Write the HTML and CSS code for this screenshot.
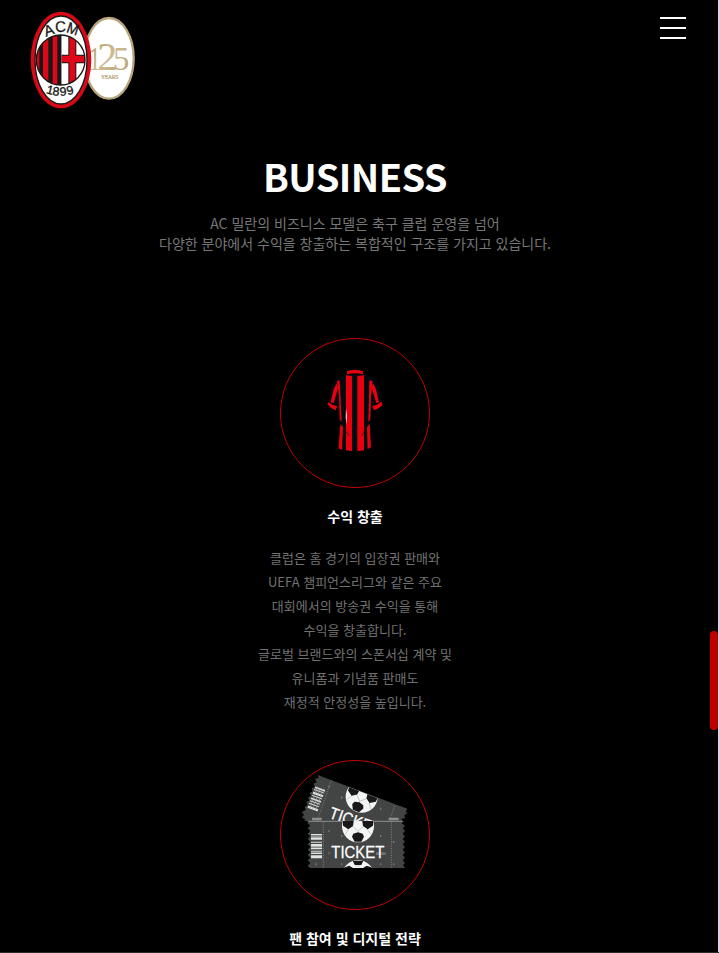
FILE: index.html
```html
<!DOCTYPE html>
<html lang="ko">
<head>
<meta charset="utf-8">
<title>AC Milan - Business</title>
<link rel="stylesheet" href="styles.css">
</head>
<body>
<div class="viewport">
<main class="page">
  <header class="header">
    <svg class="logo" viewBox="0 0 375 330" role="img" aria-label="AC Milan 125 years">
      <defs>
        <clipPath id="crest"><ellipse cx="122" cy="165" rx="73" ry="75"/></clipPath>
        <linearGradient id="gold" x1="0" y1="0" x2="1" y2="1"><stop offset="0" stop-color="#a88b55"/><stop offset=".5" stop-color="#cdbc92"/><stop offset="1" stop-color="#b49a68"/></linearGradient>
      </defs>
      <ellipse cx="267" cy="160" rx="74" ry="121" fill="#fff" stroke="#b8a57c" stroke-width="7"/>
      <g class="years" fill="url(#gold)">
        <text x="207" y="194" font-size="98"><tspan textLength="34" lengthAdjust="spacingAndGlyphs">1</tspan><tspan x="232" font-size="120">2</tspan><tspan x="279">5</tspan></text>
        <text x="243" y="221" font-size="17" textLength="52" stroke="#b49a68" stroke-width=".7">YEARS</text>
      </g>
      <ellipse cx="123" cy="165" rx="91" ry="145" fill="#d90918"/>
      <ellipse cx="123" cy="165" rx="78" ry="132" fill="#fff" stroke="#191715" stroke-width="4"/>
      <g clip-path="url(#crest)">
        <path fill="#dc0719" d="M45 85h78v160H45z"/>
        <path fill="#191715" d="M58 85h11v160H58zM85 85h13v160H85zM112 85h13v160h-13z"/>
        <path fill="#fff" d="M125 85h75v160h-75z"/>
        <path fill="#191715" d="M145 85h24v160h-24zM125 149h75v26h-75z"/>
        <path fill="#e0071b" d="M148 85h18v160h-18zM125 152h75v20h-75z"/>
      </g>
      <ellipse cx="122" cy="165" rx="73" ry="75" fill="none" stroke="#191715" stroke-width="4"/>
      <g class="crest-text">
        <text transform="translate(78 95) rotate(-19)" font-size="46" textLength="29" lengthAdjust="spacingAndGlyphs">A</text>
        <text transform="translate(106 81) rotate(-1)" font-size="46" textLength="32" lengthAdjust="spacingAndGlyphs">C</text>
        <text transform="translate(137 81) rotate(18)" font-size="46" textLength="35" lengthAdjust="spacingAndGlyphs">M</text>
        <text transform="translate(77 265) rotate(14)" font-size="37">1</text>
        <text transform="translate(97 271) rotate(5)" font-size="37">8</text>
        <text transform="translate(120 273) rotate(-5)" font-size="37">9</text>
        <text transform="translate(143 271) rotate(-15)" font-size="37">9</text>
      </g>
    </svg>
    <button class="menu" aria-label="menu"><span></span><span></span><span></span></button>
  </header>

  <section class="business">
    <h1>BUSINESS</h1>
    <p class="lead">AC 밀란의 비즈니스 모델은 축구 클럽 운영을 넘어<br>다양한 분야에서 수익을 창출하는 복합적인 구조를 가지고 있습니다.</p>

    <article class="item">
      <div class="circle">
        <svg viewBox="18 18 444 444">
          <path fill="#06080f" d="M216 121l-36 17-13 27-8 43 24 20 9-18 4 60-5 75q46 20 97 0l-5-75 5-60 8 18 26-20-8-43-13-27-36-17z"/>
          <g fill="#e9000e">
            <path d="M216 115q24-9 48 0v9q-24-6-48 0z"/>
            <path d="M213 127q9 2 18 1v226q-9 0-18-2zM247 128q10 1 20-1v225q-10 2-20 2z"/>
            <path d="M185 150l4 15-13 46-9-4 9-38zM294 150l-4 15 14 46 8-4-9-38z"/>
            <path d="M186 145l8-4 3 60 3 66-6-8-2-70zM283 141l10 4-5 45-2 69-6 8 2-66z"/>
            <path d="M161 208q11 10 26 12l-5 12q-15-6-25-18zM319 206q-11 10-27 13l5 13q17-6 26-17z"/>
            <path d="M196 274l8 8-3 69-10-5zM284 272l-8 11 2 65 10-5z"/>
          </g>
          <path d="M213 226l3 20-1 29-3-20z" fill="#d8d5cc"/>
          <path d="M202 272q8 23 20 37M276 272q-6 22-16 37" stroke="#11101a" stroke-width="2" fill="none"/>
        </svg>
      </div>
      <h2>수익 창출</h2>
      <p>클럽은 홈 경기의 입장권 판매와<br>UEFA 챔피언스리그와 같은 주요<br>대회에서의 방송권 수익을 통해<br>수익을 창출합니다.<br>글로벌 브랜드와의 스폰서십 계약 및<br>유니폼과 기념품 판매도<br>재정적 안정성을 높입니다.</p>
    </article>

    <article class="item">
      <div class="circle">
        <svg viewBox="18 18 444 444">
          <defs>
            <clipPath id="back"><path d="M128 60L398 164 380 198H80L90 160z"/></clipPath>
            <clipPath id="front"><path d="M98 198h292v141H98z"/></clipPath>
            <clipPath id="disc"><circle r="48"/></clipPath>
            <g id="ball">
              <circle r="48" fill="#f3f4f4"/>
              <g clip-path="url(#disc)">
                <path d="M-20-4L0 15 20-4M0 15V32M-28 9l-11 16M28 9l11 16M-7-30H7" stroke="#b4b6b6" stroke-width="2" fill="none"/>
                <path fill="#191719" d="M-46-24L-26-31-12-22-15-1-29 9-45-2zM46-24L26-31 12-22 15-1 29 9 45-2zM-14 22L0 18 14 22 18 31 10 46H-10L-18 31z"/>
              </g>
            </g>
          </defs>
          <path fill="#434545" d="M128 60L397 161 392 170 398 174 388 181 390 190 379 191 382 198H88L91 192 80 188 87 179 80 171 92 165 89 155 98 151 94 141 103 137 99 127 108 123 104 113 113 109 110 100 120 96 115 86 125 82 120 72 131 68z"/>
          <g clip-path="url(#back)">
            <path d="M169 76L126 198M359 153L343 198" stroke="#a3a5a5" stroke-width="2" stroke-dasharray="3 4"/>
            <g transform="translate(124 135) rotate(20)">
              <path fill="#e0e1e1" d="M-17-37h32v5h-32zM-17-29h32v3h-32zM-17-21h32v7h-32zM-17-10h32v3h-32zM-17-2h32v5h-32zM-17 7h32v3h-32zM-17 15h32v3h-32zM-17 24h32v7h-32z"/>
              <path d="M-10-38v70M-1-38v70M8-38v70" stroke="#a0a2a2" stroke-width="2"/>
            </g>
            <use href="#ball" transform="translate(260 125) rotate(22)"/>
            <text class="ticket" transform="translate(160 188) rotate(19)" font-size="50" textLength="158" lengthAdjust="spacingAndGlyphs">TICKET</text>
            <path d="M111 192h29M341 192h30" stroke="#8d8f8f" stroke-width="7"/>
          </g>
          <path fill="#434545" d="M98 198H387L380 205 390 212 383 220 390 228 383 236 390 244 383 252 390 260 383 268 390 276 383 284 390 292 383 300 390 308 383 316 390 324 384 331 390 339H105L98 332 106 324 98 316 106 308 98 300 106 292 98 284 106 276 98 268 106 260 98 252 106 244 98 236 106 228 98 220 106 212 98 205z"/>
          <path d="M100 199H383" stroke="#b1b3b3" stroke-width="2"/>
          <g clip-path="url(#front)">
            <path d="M145 202v137M349 202v137" stroke="#a3a5a5" stroke-width="2" stroke-dasharray="3 4"/>
            <use href="#ball" transform="translate(249 214)"/>
            <use href="#ball" transform="translate(249 363)"/>
            <path fill="#e1e2e2" d="M108 237h33v4h-33zM108 247h33v7h-33zM108 260h33v3h-33zM108 267h33v8h-33zM108 279h33v4h-33zM108 287h33v3h-33zM108 294h33v3h-33zM108 301h33v9h-33z"/>
            <path fill="#8b8d8d" d="M108 241h33v6h-33zM108 275h33v4h-33zM108 290h33v4h-33z"/>
            <path fill="#191719" d="M233 317h32l-6 13h-20z"/>
          </g>
          <path fill="#737676" d="M160 92h4v6h-4zM198 124h4v7h-4zM315 158h4v6h-4zM160 225h4v6h-4zM198 240h4v6h-4zM315 240h4v6h-4zM354 258h4v6h-4zM121 325h4v6h-4zM198 325h4v6h-4zM315 325h4v6h-4zM354 325h4v6h-4zM160 292h4v6h-4z"/>
          <path d="M304 296h27" stroke="#858787" stroke-width="8" stroke-dasharray="4 2"/>
          <text class="ticket" x="169" y="309" font-size="51" textLength="159" lengthAdjust="spacingAndGlyphs">TICKET</text>
        </svg>
      </div>
      <h2>팬 참여 및 디지털 전략</h2>
    </article>
  </section>
</main>
<div class="scrollbar"><div class="thumb"></div></div>
</div>
</body>
</html>
```
FILE: styles.css
```css
* { box-sizing: border-box; margin: 0; padding: 0; }
html, body { height: 100%; overflow: hidden; }
body {
  background: #000;
  color: #fff;
  font-family: "Noto Sans CJK KR", sans-serif;
}
.viewport {
  display: flex;
  height: 953px;
  border-bottom: 1px solid #2b2b2b;
}
.page { flex: 1; min-width: 0; overflow: hidden; }
.scrollbar {
  width: 9px;
  padding-top: 631px;
  border-right: 1px solid #cbdcf5;
}
.thumb { height: 99px; border-radius: 4px; background: #c00000; }
.header {
  display: flex;
  justify-content: space-between;
  align-items: flex-start;
  height: 154px;
  padding: 5px 24px 0 20px;
}
.logo { width: 125px; height: 110px; }
.years { font-family: "Liberation Serif", serif; }
.crest-text { font-family: "Liberation Sans", sans-serif; fill: #191715; stroke: #191715; stroke-width: 1px; }
.menu {
  display: flex;
  flex-direction: column;
  gap: 8px;
  width: 26px;
  margin-top: 12px;
  border: 0;
  background: none;
}
.menu span { height: 2px; width: 26px; background: #fff; }
.business { text-align: center; }
h1 { font-size: 38px; line-height: 44px; font-weight: 700; letter-spacing: -.6px; }
.lead {
  margin: 15px 0 85px;
  color: #777;
  font-size: 14px;
  line-height: 20px;
}
.item { height: 422px; }
.circle {
  width: 150px;
  height: 150px;
  margin: 0 auto;
  border: 1px solid #c00000;
  border-radius: 50%;
}
.circle svg { display: block; width: 148px; height: 148px; }
.ticket { font-family: "Liberation Sans", sans-serif; fill: #fff; stroke: #fff; stroke-width: .8px; }
h2 { margin-top: 18px; font-size: 14px; line-height: 20px; font-weight: 700; }
.item p { margin-top: 20px; color: #717171; font-size: 13px; line-height: 24px; }
```
